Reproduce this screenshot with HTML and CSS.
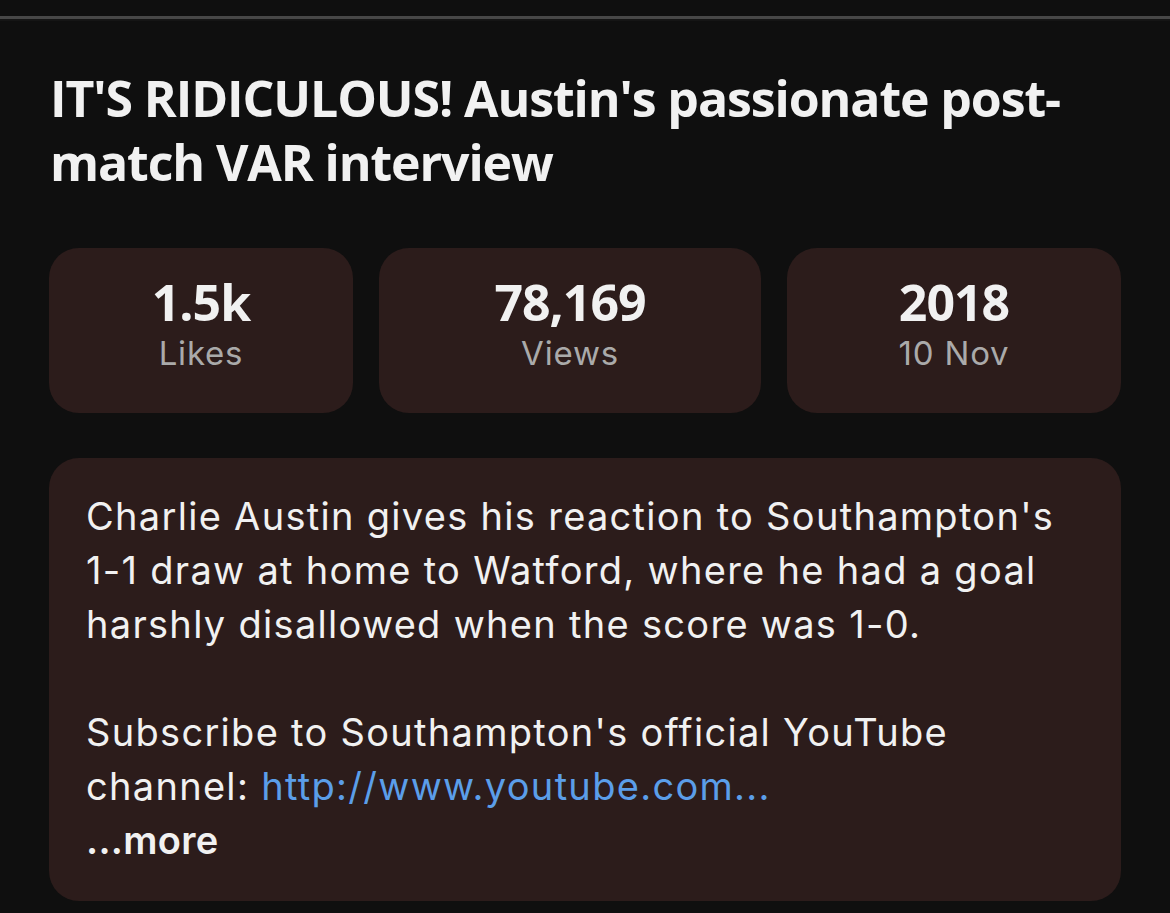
FILE: index.html
```html
<!DOCTYPE html>
<html lang="en">
<head>
    <meta charset="UTF-8">
    <meta name="viewport" content="width=device-width, initial-scale=1.0">
    <title>Video details</title>
    <link rel="stylesheet" href="styles.css">
</head>
<body>
    <div class="top-rule"></div>
    <div class="page">
        <h1 class="video-title">IT'S RIDICULOUS! Austin's passionate post-match VAR interview</h1>

        <!-- Stats -->
        <div class="stats">
            <div class="stat">
                <div class="stat-value">1.5k</div>
                <div class="stat-label">Likes</div>
            </div>
            <div class="stat">
                <div class="stat-value">78,169</div>
                <div class="stat-label">Views</div>
            </div>
            <div class="stat">
                <div class="stat-value">2018</div>
                <div class="stat-label">10 Nov</div>
            </div>
        </div>

        <!-- Description -->
        <div class="description">
            <p>Charlie Austin gives his reaction to Southampton's 1-1 draw at home to Watford, where he had a goal harshly disallowed when the score was 1-0.</p>
            <p>Subscribe to Southampton's official YouTube channel: <a href="#" class="link">http://www.youtube.com...</a></p>
            <div class="more">...more</div>
        </div>
    </div>
</body>
</html>
```

FILE: styles.css
```css
body {
    margin: 0;
    background-color: #0f0f0f;
    font-family: Inter, Roboto, "Liberation Sans", sans-serif;
    color: #f1f1f1;
}

.top-rule {
    margin-top: 16px;
    height: 3px;
    background-color: #474747;
    border-bottom: 2px solid #151515;
}

.page {
    padding: 0 49px;
}

.video-title {
    margin: 45px 0 0 1px;
    font-family: "Open Sans", sans-serif;
    font-size: 50px;
    font-weight: 700;
    line-height: 64px;
    letter-spacing: -1.1px;
    color: #f1f1f1;
}

.stats {
    display: grid;
    grid-template-columns: 304fr 382fr 334fr;
    gap: 26px;
    margin-top: 54px;
}

.stat {
    height: 165px;
    box-sizing: border-box;
    padding-top: 26px;
    background-color: #2c1c1b;
    border-radius: 30px;
    text-align: center;
}

.stat-value {
    font-family: "Open Sans", sans-serif;
    font-size: 50px;
    font-weight: 700;
    line-height: 56px;
    letter-spacing: -1px;
}

.stat-label {
    font-size: 33px;
    line-height: 46px;
    letter-spacing: 0.8px;
    color: #aaaaaa;
}

.description {
    margin-top: 45px;
    padding: 31px 37px 34px;
    background-color: #2c1c1b;
    border-radius: 30px;
    font-size: 38px;
    line-height: 54px;
    letter-spacing: 1.3px;
}

.description p {
    margin: 0 0 54px;
}

.description p:last-of-type {
    margin-bottom: 0;
}

.link {
    color: #5b9ee9;
    text-decoration: none;
}

.more {
    font-weight: 600;
    letter-spacing: 0.3px;
}
```
